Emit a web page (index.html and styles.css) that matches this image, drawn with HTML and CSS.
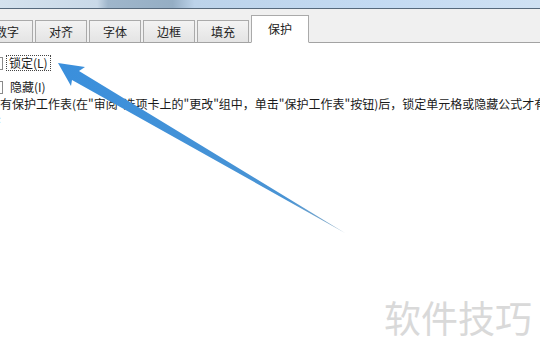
FILE: index.html
```html
<!DOCTYPE html>
<html lang="zh">
<head>
<meta charset="utf-8">
<link rel="stylesheet" href="styles.css">
</head>
<body>
<div class="page">
  <div class="titlebar"><span class="patch"></span></div>
  <div class="tabstrip">
    <div class="tabs">
      <div class="tab first">数字</div>
      <div class="tab">对齐</div>
      <div class="tab">字体</div>
      <div class="tab">边框</div>
      <div class="tab">填充</div>
      <div class="tab active">保护</div>
    </div>
  </div>
  <div class="content">
    <div class="row row-lock"><span class="box"></span><span class="label focus">锁定(L)</span></div>
    <div class="row row-hide"><span class="box"></span><span class="label">隐藏(I)</span></div>
    <p class="note">有保护工作表(在"审阅"选项卡上的"更改"组中，单击"保护工作表"按钮)后，锁定单元格或隐藏公式才有效。</p>
    <p class="tail">:</p>
  </div>
  <svg class="arrow" width="540" height="360" viewBox="0 0 540 360">
    <defs>
      <linearGradient id="g" x1="58" y1="64" x2="344" y2="232" gradientUnits="userSpaceOnUse">
        <stop offset="0" stop-color="#3a8fdc"/>
        <stop offset="0.8" stop-color="#4a94d4"/>
        <stop offset="1" stop-color="#8fb0c8"/>
      </linearGradient>
    </defs>
    <polygon points="58,63 85,67 79,71 345,233 72,80 71,86" fill="url(#g)"/>
  </svg>
  <div class="watermark">软件技巧</div>
</div>
</body>
</html>
```
FILE: styles.css
```css
html, body {
  margin: 0;
  padding: 0;
  background: #fff;
}
.page {
  position: relative;
  width: 540px;
  height: 360px;
  overflow: hidden;
  font-family: "Noto Sans CJK SC", "Liberation Sans", sans-serif;
  font-size: 12px;
  color: #1a1a1a;
  background: #fff;
}
.titlebar {
  height: 8px;
  background: linear-gradient(90deg, #d4e2ee 0%, #c9d9e8 18%, #9fb6cb 20%, #95aec4 32%, #bcd3ea 36%, #c3daf2 70%, #cfe1f3 100%);
  border-bottom: 1px solid #56697c;
}
.tabstrip {
  height: 33px;
  background: #f0f0f0;
  border-bottom: 1px solid #a3a3a3;
  display: flex;
  align-items: flex-end;
}
.tabs {
  display: flex;
  align-items: flex-end;
  gap: 2px;
  margin-left: -19px;
  margin-bottom: -1px;
}
.tab {
  width: 50px;
  height: 21px;
  line-height: 21px;
  text-align: center;
  border: 1px solid #aaa;
  border-bottom-color: #a3a3a3;
  background: linear-gradient(#f3f3f3, #e4e4e4);
  color: #222;
  font-size: 12px;
}
.tab.active {
  width: 56px;
  height: 26px;
  line-height: 26px;
  background: #fff;
  border-bottom-color: #fff;
}
.content {
  margin-left: -10px;
  padding-top: 12px;
}
.row {
  display: flex;
  align-items: center;
  gap: 3px;
  height: 16px;
}
.row-hide {
  margin-top: 8px;
  gap: 5px;
}
.box {
  width: 11px;
  height: 11px;
  border: 1px solid #8a8a8a;
  background: #fff;
}
.label {
  padding: 0 2px;
  line-height: 14px;
}
.label.focus {
  border: 1px dotted #444;
}
.note {
  margin: 2px 0 0 10px;
  white-space: nowrap;
  line-height: 14px;
}
.tail {
  margin: 2px 0 0 8px;
  line-height: 12px;
  font-size: 10px;
  color: #555;
}
.arrow {
  position: absolute;
  left: 0;
  top: 0;
}
.watermark {
  position: absolute;
  left: 384px;
  top: 293px;
  font-size: 37px;
  line-height: 48px;
  color: #d9d9d9;
  letter-spacing: 0;
}
```
